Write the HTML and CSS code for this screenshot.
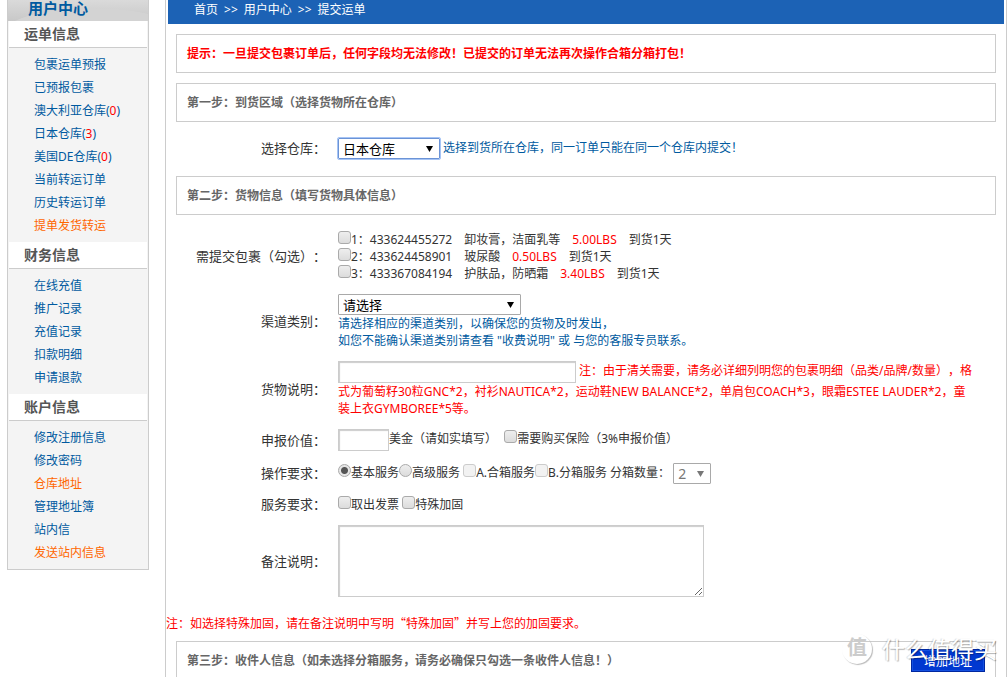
FILE: index.html
```html
<!DOCTYPE html>
<html lang="zh-CN">
<head>
<meta charset="utf-8">
<title>提交运单</title>
<link rel="stylesheet" href="styles.css">
</head>
<body>
<div class="page">
  <nav class="sidebar">
    <h2 class="sidebar-title">用户中心</h2>
    <h3 class="menu-title">运单信息</h3>
    <ul class="menu">
      <li><a href="#">包裹运单预报</a></li>
      <li><a href="#">已预报包裹</a></li>
      <li><a href="#">澳大利亚仓库(<span class="red">0</span>)</a></li>
      <li><a href="#">日本仓库(<span class="red">3</span>)</a></li>
      <li><a href="#">美国DE仓库(<span class="red">0</span>)</a></li>
      <li><a href="#">当前转运订单</a></li>
      <li><a href="#">历史转运订单</a></li>
      <li><a class="hot" href="#">提单发货转运</a></li>
    </ul>
    <h3 class="menu-title">财务信息</h3>
    <ul class="menu">
      <li><a href="#">在线充值</a></li>
      <li><a href="#">推广记录</a></li>
      <li><a href="#">充值记录</a></li>
      <li><a href="#">扣款明细</a></li>
      <li><a href="#">申请退款</a></li>
    </ul>
    <h3 class="menu-title">账户信息</h3>
    <ul class="menu">
      <li><a href="#">修改注册信息</a></li>
      <li><a href="#">修改密码</a></li>
      <li><a class="hot" href="#">仓库地址</a></li>
      <li><a href="#">管理地址簿</a></li>
      <li><a href="#">站内信</a></li>
      <li><a class="hot" href="#">发送站内信息</a></li>
    </ul>
  </nav>
  <main class="main">
    <div class="crumbs"><a href="#">首页</a><span>&gt;&gt;</span><a href="#">用户中心</a><span>&gt;&gt;</span>提交运单</div>
    <p class="panel warning">提示：一旦提交包裹订单后，任何字段均无法修改！已提交的订单无法再次操作合箱分箱打包！</p>
    <h3 class="panel">第一步：到货区域（选择货物所在仓库）</h3>
    <div class="fields fields-area">
      <label class="name" for="warehouse">选择仓库：</label>
      <div class="value hint"><select id="warehouse" class="select select-warehouse"><option>日本仓库</option></select> 选择到货所在仓库，同一订单只能在同一个仓库内提交！</div>
    </div>
    <h3 class="panel">第二步：货物信息（填写货物具体信息）</h3>
    <div class="fields fields-goods">
      <span class="name">需提交包裹（勾选）：</span>
      <div class="value">
        <label class="parcel"><input type="checkbox">1：433624455272<span>卸妆膏，洁面乳等</span><span class="red">5.00LBS</span><span>到货1天</span></label>
        <label class="parcel"><input type="checkbox">2：433624458901<span>玻尿酸</span><span class="red">0.50LBS</span><span>到货1天</span></label>
        <label class="parcel"><input type="checkbox">3：433367084194<span>护肤品，防晒霜</span><span class="red">3.40LBS</span><span>到货1天</span></label>
      </div>

      <label class="name" for="channel">渠道类别：</label>
      <div class="value hint">
        <select id="channel" class="select select-channel"><option>请选择</option></select>
        <div>请选择相应的渠道类别，以确保您的货物及时发出，<br>如您不能确认渠道类别请查看 "收费说明" 或 与您的客服专员联系。</div>
      </div>

      <label class="name" for="goods">货物说明：</label>
      <div class="value red"><input id="goods" class="text text-goods" type="text"> 注：由于清关需要，请务必详细列明您的包裹明细（品类/品牌/数量），格式为葡萄籽30粒GNC*2，衬衫NAUTICA*2，运动鞋NEW BALANCE*2，单肩包COACH*3，眼霜ESTEE LAUDER*2，童装上衣GYMBOREE*5等。</div>

      <label class="name" for="price">申报价值：</label>
      <div class="value"><input id="price" class="text text-price" type="text">美金（请如实填写） <label class="insure"><input type="checkbox">需要购买保险（3%申报价值）</label></div>

      <span class="name">操作要求：</span>
      <div class="value"><label><input type="radio" name="service" checked>基本服务</label><label><input type="radio" name="service">高级服务</label> <label><input type="checkbox" disabled>A.合箱服务</label><label><input type="checkbox" disabled>B.分箱服务</label> <label for="boxes">分箱数量：</label> <select id="boxes" class="select select-boxes" disabled><option>2</option></select></div>

      <span class="name">服务要求：</span>
      <div class="value"><label><input type="checkbox">取出发票</label> <label><input type="checkbox">特殊加固</label></div>

      <label class="name" for="remark">备注说明：</label>
      <div class="value"><textarea id="remark" class="text remark"></textarea></div>
    </div>
    <p class="note red">注：如选择特殊加固，请在备注说明中写明“特殊加固”并写上您的加固要求。</p>
    <div class="panel panel-action">
      <h3>第三步：收件人信息（如未选择分箱服务，请务必确保只勾选一条收件人信息！）</h3>
      <button class="add" type="button">增加地址</button>
    </div>
  </main>
</div>
<div class="watermark"><span class="badge">值</span><span>什么值得买</span></div>
</body>
</html>
```
FILE: styles.css
```css
* {
  box-sizing: border-box;
}

body {
  height: 100vh;
  margin: 0;
  overflow: hidden;
  position: relative;
  background: #fff;
  color: #333;
  font: 12px/17px "Noto Sans", "Noto Sans CJK SC", sans-serif;
  text-spacing-trim: space-all;
}

h2, h3, p, ul {
  margin: 0;
  padding: 0;
}

a {
  color: inherit;
  text-decoration: none;
}

.page {
  display: flex;
  align-items: flex-start;
  gap: 16px;
  padding: 0 1px 0 7px;
}

.red {
  color: #f00;
}

/* Side menu */
.sidebar {
  flex: 0 0 142px;
  border: 1px solid #ccc;
  border-top: 0;
  background: #f4f4f4;
}

.sidebar-title {
  height: 21px;
  padding-left: 20px;
  background: radial-gradient(ellipse 90px 26px at 84px 34px, #d3d3d3 98%, transparent 100%), linear-gradient(#dadada, #c8c8c8);
  color: #005aa0;
  font-size: 15px;
  line-height: 16px;
}

.menu-title {
  margin: 0 1px;
  padding-left: 15px;
  border-bottom: 1px solid #ccc;
  background: #fff;
  color: #555;
  font-size: 14px;
  line-height: 26px;
}

.menu {
  padding: 5px 0 5px 26px;
  color: #005aa0;
  line-height: 23px;
  list-style: none;
}

.hot {
  color: #f60;
}

/* Content column */
.main {
  flex: 1;
  min-width: 0;
  min-height: 100vh;
  border: solid #ccc;
  border-width: 0 1px;
}

.crumbs {
  display: flex;
  gap: 6px;
  height: 24px;
  margin: 0 2px;
  padding-left: 26px;
  background: #1c62b5;
  color: #fff;
  line-height: 20px;
}

.panel {
  margin: 10px 10px 0;
  padding: 0 10px;
  border: 1px solid #ccc;
  color: #666;
  font-size: 12px;
  font-weight: bold;
  line-height: 37px;
}

.warning {
  color: #f00;
}

.panel-action {
  display: flex;
  align-items: center;
  justify-content: space-between;
}

.panel-action h3 {
  font-size: 12px;
}

.fields {
  display: grid;
  grid-template-columns: 160px 1fr;
  gap: 12px;
  align-items: center;
  padding-right: 30px;
}

.fields-area {
  padding-top: 16px;
  padding-bottom: 7px;
}

.fields-goods {
  padding-top: 16px;
}

.name {
  font-size: 13px;
  text-align: right;
}

.hint {
  color: #005aa0;
}

.parcel {
  display: block;
}

.parcel span {
  margin-left: 12px;
}

.insure {
  margin-left: 4px;
}

/* Form controls */
input[type="checkbox"],
input[type="radio"] {
  appearance: none;
  width: 13px;
  height: 13px;
  margin: 0;
  border: 1px solid #aaa;
  border-radius: 3px;
  background: linear-gradient(#eee, #dcdcdc);
  vertical-align: baseline;
}

input[type="radio"] {
  border-radius: 50%;
}

input[type="radio"]:checked {
  background: radial-gradient(circle, #555 3px, #e6e6e6 4px);
}

input[type="checkbox"]:disabled {
  border-color: #ccc;
  background: #f2f2f2;
}

.select {
  appearance: none;
  height: 21px;
  padding: 0 4px;
  border: 1px solid #a9a9a9;
  border-radius: 1px;
  background: #fff url("data:image/svg+xml,%3Csvg xmlns='http://www.w3.org/2000/svg' width='7' height='6'%3E%3Cpath d='M0 0h7L3.5 6z'/%3E%3C/svg%3E") no-repeat right 6px center;
  color: #000;
  font: 13px "Noto Sans", "Noto Sans CJK SC", sans-serif;
  vertical-align: middle;
}

.select-warehouse {
  width: 102px;
  border-color: #6b93d6;
  outline: 1px solid #a6c4f5;
}

.select-channel {
  display: block;
  width: 183px;
}

.select-boxes {
  width: 38px;
  color: #777;
  font-size: 14px;
  opacity: 1;
  background-image: url("data:image/svg+xml,%3Csvg xmlns='http://www.w3.org/2000/svg' width='7' height='6'%3E%3Cpath fill='%23777' d='M0 0h7L3.5 6z'/%3E%3C/svg%3E");
}

.text {
  height: 22px;
  padding: 0 4px;
  border: 1px solid #ccc;
  background: #fff;
  box-shadow: inset 1px 1px 1px #ccc;
  vertical-align: middle;
}

.text-goods {
  width: 238px;
}

.text-price {
  width: 51px;
}

.remark {
  display: block;
  width: 366px;
  height: 72px;
}

.note {
  padding: 17px 0 0;
  font-family: "Noto Sans CJK SC", sans-serif;
}

.add {
  height: 23px;
  padding: 0 12px;
  border: 1px solid #0027a0;
  background: #0038d0;
  box-shadow: inset 0 0 0 1px #1450e0;
  color: #fff;
  font: 12px "Noto Sans", "Noto Sans CJK SC", sans-serif;
}

/* Site mark laid over the page corner */
.watermark {
  position: absolute;
  right: 11px;
  bottom: 12px;
  display: flex;
  align-items: center;
  gap: 10px;
  color: #fff;
  font-size: 23px;
  line-height: 32px;
  text-shadow: 1px 1px 1px rgba(0, 0, 0, 0.3), -1px 0 1px rgba(0, 0, 0, 0.15);
  pointer-events: none;
}

.badge {
  width: 30px;
  height: 30px;
  border-radius: 50%;
  box-shadow: 1px 1px 1px #bbb;
  color: #ccc;
  font-size: 20px;
  font-weight: bold;
  line-height: 28px;
  text-align: center;
  text-shadow: none;
}
```
